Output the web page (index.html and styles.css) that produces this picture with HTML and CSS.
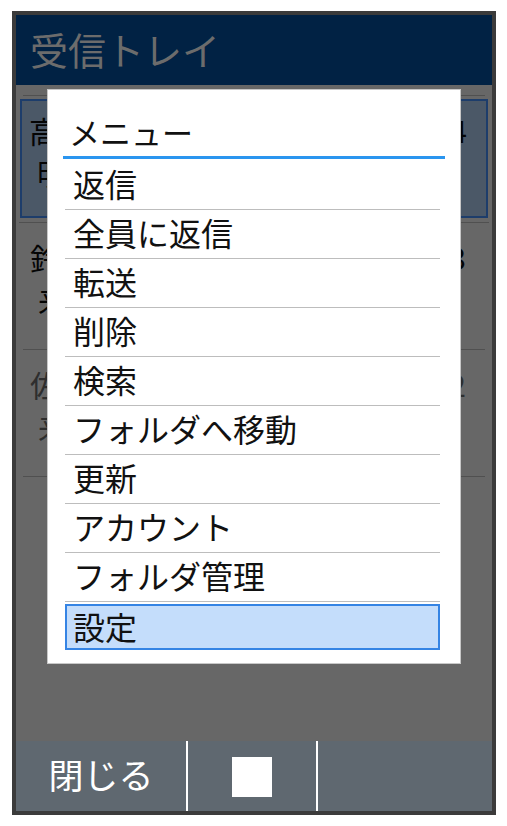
FILE: index.html
```html
<!DOCTYPE html>
<html lang="ja">
<head>
<meta charset="utf-8">
<link rel="stylesheet" href="styles.css">
</head>
<body>
<div class="frame">
  <header class="appbar"><h1 class="title">受信トレイ</h1></header>
  <main class="list">
    <div class="mail sel">
      <div class="row"><span class="from">高橋</span><span class="time">4</span></div>
      <div class="row sub"><span>明日</span></div>
    </div>
    <div class="mail">
      <div class="row"><span class="from">鈴木</span><span class="time">3</span></div>
      <div class="row sub"><span>来週</span></div>
    </div>
    <div class="mail read">
      <div class="row"><span class="from">佐藤</span><span class="time">2</span></div>
      <div class="row sub"><span>来月</span></div>
    </div>
  </main>
  <footer class="softkeys">
    <div class="key">閉じる</div>
    <div class="key"><span class="square"></span></div>
    <div class="key"></div>
  </footer>

  <div class="popup">
    <div class="popup-title">メニュー</div>
    <ul class="menu">
      <li class="item">返信</li>
      <li class="item">全員に返信</li>
      <li class="item">転送</li>
      <li class="item">削除</li>
      <li class="item">検索</li>
      <li class="item">フォルダへ移動</li>
      <li class="item">更新</li>
      <li class="item">アカウント</li>
      <li class="item">フォルダ管理</li>
      <li class="item active">設定</li>
    </ul>
  </div>
</div>
</body>
</html>
```
FILE: styles.css
```css
* { box-sizing: border-box; }
html, body { margin: 0; padding: 0; background: #fff; }
body {
  font-family: "Noto Sans CJK JP", "Noto Sans", sans-serif;
}
.frame {
  position: relative;
  margin: 11px 0 0 12px;
  width: 484px;
  height: 804px;
  border: 4px solid #3b3b3b;
  background: #676767;
  display: flex;
  flex-direction: column;
  overflow: hidden;
}
.appbar {
  height: 70px;
  flex: none;
  background: #012244;
  display: flex;
  align-items: center;
  padding-left: 14px;
}
.title {
  margin: 0;
  font-weight: 400;
  font-size: 38px;
  line-height: 1;
  color: #6c6c6c;
  padding-bottom: 2px;
}
.list {
  flex: 1;
  padding: 10px 7px 0 7px;
}
.list::before {
  content: "";
  display: block;
  height: 1px;
  background: #505050;
}
.mail {
  height: 127px;
  border-bottom: 1px solid #505050;
  padding: 13px 19px 0 7px;
  color: #050505;
  font-size: 30px;
}
.mail.sel {
  position: relative;
  margin: 0 -4px;
  padding: 3px 0 4px;
}
.mail.sel::before {
  content: "";
  position: absolute;
  left: 1px; right: 1px; top: 3px; bottom: 4px;
  background: #4b5867;
  border: 2px solid #1d3d6b;
}
.mail.sel .row { position: relative; padding: 0 22px 0 10px; }
.mail.sel .row:first-child { margin-top: 10px; }
.mail.sel .row.sub { padding-left: 18px; }
.row {
  display: flex;
  justify-content: space-between;
  line-height: 42px;
  height: 42px;
  white-space: nowrap;
}
.row.sub { padding-left: 8px; }
.mail.read { color: #2e2e2e; }
.softkeys {
  height: 70px;
  flex: none;
  background: #5f6870;
  display: flex;
}
.key {
  display: flex;
  align-items: center;
  justify-content: center;
  color: #fff;
  font-size: 35px;
  padding-bottom: 6px;
}
.key:nth-child(1) { width: 172px; border-right: 2px solid #fff; }
.key:nth-child(2) { width: 130px; border-right: 2px solid #fff; }
.key:nth-child(3) { flex: 1; }
.square {
  width: 40px;
  height: 40px;
  background: #fff;
  margin-top: 8px;
}
.popup {
  position: absolute;
  left: 31px;
  top: 74px;
  width: 414px;
  height: 575px;
  background: #fff;
  border: 1px solid #c8c8c8;
  padding: 0 20px 0 17px;
}
.popup-title {
  margin: 0 -5px 0 -2px;
  height: 69px;
  border-bottom: 3px solid #2a95ef;
  font-size: 31px;
  line-height: 1;
  color: #111;
  padding: 26px 0 0 6px;
}
.menu {
  list-style: none;
  margin: 2px 0 0 0;
  padding: 0;
}
.item {
  height: 49px;
  border-bottom: 1px solid #bdbdbd;
  font-size: 32px;
  line-height: 45px;
  color: #111;
  padding-left: 8px;
  white-space: nowrap;
}
.item.active {
  margin-top: 2px;
  height: 46px;
  border: 2px solid #3584e4;
  background: #c4ddfb;
  line-height: 41px;
  padding-left: 6px;
}
```
